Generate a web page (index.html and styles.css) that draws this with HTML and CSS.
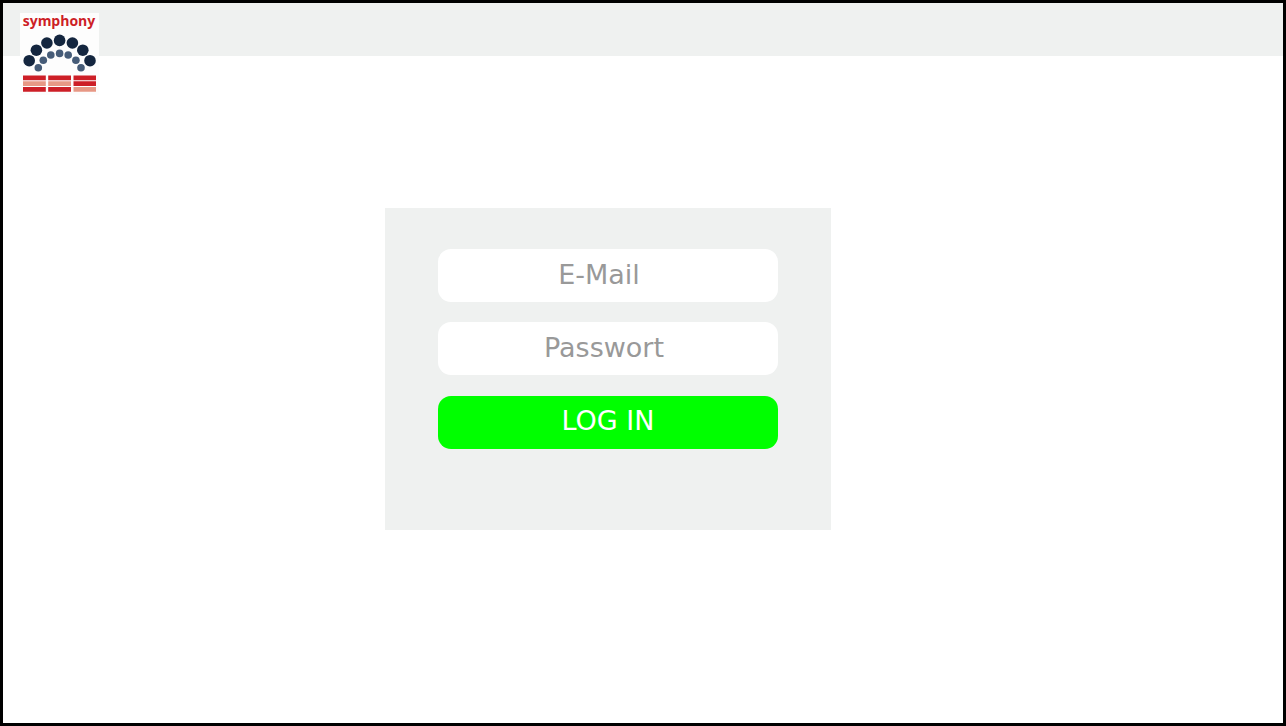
FILE: index.html
```html
<!DOCTYPE html>
<html lang="de">
<head>
<meta charset="utf-8">
<title>symphony</title>
<link rel="stylesheet" href="styles.css">
</head>
<body>
<div class="page">
  <header class="topbar">
    <svg class="logo" viewBox="20 13 79 82" role="img" aria-label="symphony">
      <rect class="logo-bg" x="20" y="13" width="79" height="82"/>
      <text class="logo-name" x="59" y="26" text-anchor="middle">symphony</text>
      <g class="dots-outer">
        <circle cx="29.2" cy="60.7" r="5.8"/>
        <circle cx="36.4" cy="50.2" r="5.8"/>
        <circle cx="46.9" cy="43" r="5.8"/>
        <circle cx="59.6" cy="40.4" r="5.8"/>
        <circle cx="72.4" cy="43" r="5.8"/>
        <circle cx="82.8" cy="50.2" r="5.8"/>
        <circle cx="90" cy="60.7" r="5.8"/>
      </g>
      <g class="dots-inner">
        <circle cx="38.3" cy="67.7" r="3.8"/>
        <circle cx="43.3" cy="60.3" r="3.8"/>
        <circle cx="50.8" cy="55" r="3.8"/>
        <circle cx="59.6" cy="53.4" r="3.8"/>
        <circle cx="68.2" cy="55" r="3.8"/>
        <circle cx="75.9" cy="60.3" r="3.8"/>
        <circle cx="81" cy="67.7" r="3.8"/>
      </g>
      <path class="bars-red" d="M23 75.6h22.8v4.6H23zM48.2 75.6H71v4.6H48.2zM73.5 75.6H96v4.6H73.5zM73.5 81.3H96v4.6H73.5zM23 87.1h22.8v4.6H23zM48.2 87.1H71v4.6H48.2z"/>
      <path class="bars-pink" d="M23 81.3h22.8v4.6H23zM48.2 81.3H71v4.6H48.2zM73.5 87.1H96v4.6H73.5z"/>
    </svg>
  </header>
  <main class="content">
    <form class="login">
      <input class="field field-email" type="email" placeholder="E-Mail" aria-label="E-Mail">
      <input class="field field-password" type="password" placeholder="Passwort" aria-label="Passwort">
      <button class="submit" type="button">LOG IN</button>
    </form>
  </main>
</div>
</body>
</html>
```
FILE: styles.css
```css
* {
  box-sizing: border-box;
}

body {
  margin: 0;
  background: #fff;
  font-family: "DejaVu Sans", sans-serif;
}

.page {
  min-height: 100vh;
  border: 3px solid #000;
}

.topbar {
  height: 53px;
  padding: 10px 17px;
  background: #eff1f0;
}

.logo {
  display: block;
  width: 79px;
  height: 82px;
  overflow: visible;
}

.logo-bg {
  fill: #fdfdfd;
}

.logo-name {
  font-family: "Open Sans", sans-serif;
  font-size: 14px;
  font-weight: 700;
  fill: #cd1f27;
}

.dots-outer {
  fill: #14263f;
}

.dots-inner {
  fill: #465c78;
}

.bars-red {
  fill: #cd1f27;
}

.bars-pink {
  fill: #e79885;
}

.content {
  display: flex;
  justify-content: center;
  padding: 152px 70px 0 0;
}

.login {
  display: flex;
  flex-direction: column;
  gap: 20px;
  width: 446px;
  padding: 41px 53px 81px;
  background: #eff1f0;
}

.field,
.submit {
  width: 100%;
  height: 53px;
  border: 0;
  border-radius: 13px;
  font-family: inherit;
  font-size: 27px;
  text-align: center;
}

.field {
  background: #fff;
  color: #333;
}

.field::placeholder {
  color: #999;
  opacity: 1;
}

.field-email {
  padding: 0 18px 2px 0;
}

.field-password {
  padding: 0 8px 2px 0;
}

.submit {
  margin-top: 1px;
  padding: 0 0 4px;
  background: #0f0;
  color: #fff;
}
```
